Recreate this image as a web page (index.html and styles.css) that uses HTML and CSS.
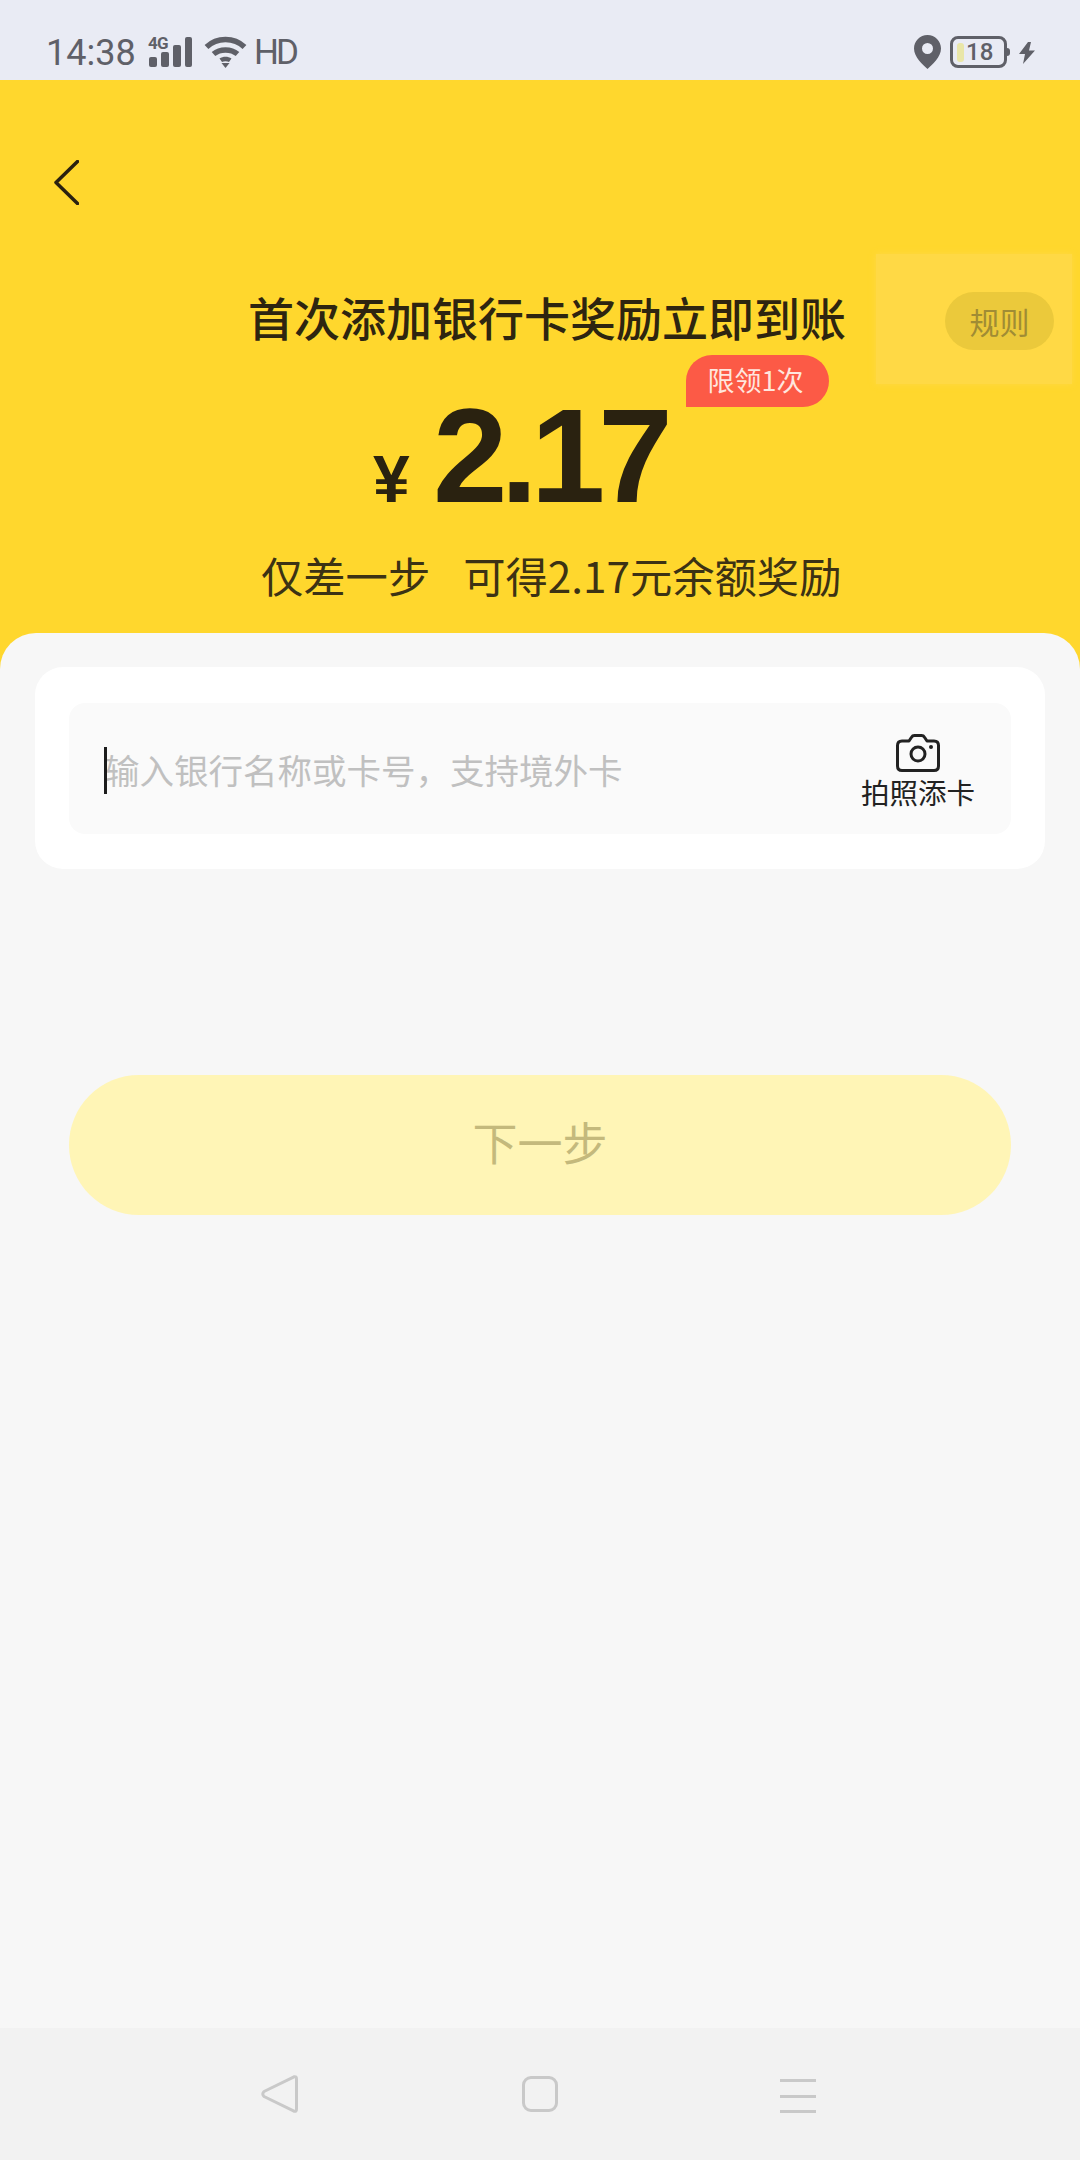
FILE: index.html
```html
<!DOCTYPE html>
<html lang="zh-CN">
<head>
<meta charset="utf-8">
<title>添加银行卡</title>
<link rel="stylesheet" href="styles.css">
</head>
<body>
<div class="page">
  <header class="status">
    <div class="status-left">
      <span class="time">14:38</span>
      <span class="signal">
        <span class="net">4G</span>
        <svg class="signal-bars" viewBox="0 0 43 30" width="43" height="30"><rect x="0" y="20" width="8" height="10" rx="2"/><rect x="12" y="15" width="8" height="15" rx="2"/><rect x="24" y="8" width="8" height="22" rx="2"/><rect x="36" y="0" width="7" height="30" rx="2"/></svg>
      </span>
      <svg class="wifi" viewBox="0 0 43 32" width="43" height="32"><g fill="none" stroke="#5f6068" stroke-width="5.500"><path d="M2.500 11C13 1 30 1 40.500 11"/><path d="M9.500 18C16 12.500 27 12.500 33.500 18"/></g><path d="M15.500 22.500C19 20 24 20 27.500 22.500L25 26C23 25 20 25 18 26Z"/><path d="M17.500 27H25.500L21.500 32Z"/></svg>
      <span class="hd">HD</span>
    </div>
    <div class="status-right">
      <svg class="pin" viewBox="0 0 27 34" width="27" height="34"><path fill-rule="evenodd" d="M13.500 0C6 0 0 6 0 13.500C0 22 9 30 13.500 34C18 30 27 22 27 13.500C27 6 21 0 13.500 0ZM13.500 8A5.500 5.500 0 1 1 13.500 19A5.500 5.500 0 1 1 13.500 8Z"/></svg>
      <span class="battery"><span class="battery-fill"></span><span class="battery-num">18</span></span>
      <span class="battery-nub"></span>
      <svg class="bolt" viewBox="0 0 16 22" width="16" height="22"><path d="M9 0L0 12H6L4 22L16 8.500H10L12 0Z"/></svg>
    </div>
  </header>

  <section class="hero">
    <svg class="back" viewBox="0 0 25 45" width="25" height="45"><path d="M23.500 1.500L2 22.500L23.500 43.500" fill="none" stroke="#2a2110" stroke-width="3.500" stroke-linecap="round" stroke-linejoin="round"/></svg>
    <h1 class="title">首次添加银行卡奖励立即到账</h1>
    <div class="amount"><span class="yen">¥</span><span class="value">2.17</span></div>
    <p class="sub"><span>仅差一步</span><span>可得2.17元余额奖励</span></p>
    <div class="rule-glow"><span class="rule-pill">规则</span></div>
    <span class="badge">限领1次</span>
  </section>

  <main class="sheet">
    <div class="card">
      <div class="field">
        <span class="hint"><i class="caret"></i>输入银行名称或卡号，支持境外卡</span>
        <div class="scan">
          <svg class="camera" viewBox="0 0 44 38" width="44" height="38"><path d="M13 7L15.500 3.200Q16.500 1.500 18.500 1.500H25.500Q27.500 1.500 28.500 3.200L31 7H38Q42.500 7 42.500 11.500V32Q42.500 36.500 38 36.500H6Q1.500 36.500 1.500 32V11.500Q1.500 7 6 7Z" fill="none" stroke="#222" stroke-width="3" stroke-linejoin="round"/><circle cx="22" cy="20" r="7" fill="none" stroke="#222" stroke-width="3"/><circle cx="35" cy="13" r="2" fill="#222"/></svg>
          <span class="scan-label">拍照添卡</span>
        </div>
      </div>
    </div>
    <button class="next" type="button">下一步</button>
  </main>

  <nav class="navbar">
    <svg class="nav-back" viewBox="0 0 37 38" width="37" height="38"><path d="M33 1.800Q35.500 1 35.500 4V34Q35.500 37 33 36.200L3 21.500Q0.500 19 3 16.500Z" fill="none" stroke="#c9c9c9" stroke-width="3" stroke-linejoin="round"/></svg>
    <span class="nav-home"></span>
    <span class="nav-menu"><i></i><i></i><i></i></span>
  </nav>
</div>
</body>
</html>
```
FILE: styles.css
```css
* { box-sizing: border-box; }
html, body { margin: 0; padding: 0; }
body { font-family: "Noto Sans CJK SC", "Noto Sans", sans-serif; background: #f7f7f7; }
.page { width: 1080px; height: 2160px; display: flex; flex-direction: column; overflow: hidden; }

.status { height: 80px; flex: none; background: #e9ebf4; display: flex; justify-content: space-between; padding: 0 45px 0 46px; color: #5f6068; }
.status svg { fill: #5f6068; display: block; }
.status-left { display: flex; align-items: flex-start; }
.time { font: 400 36px/40px Roboto, sans-serif; margin-top: 33px; width: 103px; white-space: nowrap; }
.signal { position: relative; width: 43px; margin-top: 37px; height: 30px; }
.signal-bars { position: absolute; left: 0; top: 0; }
.net { position: absolute; left: -1px; top: -2px; z-index: 1; font: 700 17px/16px Roboto, sans-serif; letter-spacing: -0.800px; background: #e9ebf4; width: 22px; height: 16px; text-align: left; }
.wifi { margin: 36px 0 0 12px; }
.hd { font: 400 35px/40px Roboto, sans-serif; letter-spacing: -3px; margin: 33px 0 0 7px; }
.status-right { display: flex; align-items: flex-start; }
.pin { margin-top: 35px; }
.battery { width: 57px; height: 32px; margin: 36px 0 0 9px; border: 3px solid #5f6068; border-radius: 8px; display: flex; align-items: center; padding-left: 4px; }
.battery-fill { width: 7px; height: 19px; background: #e9e6a8; border-radius: 3px; flex: none; }
.battery-num { font: 500 24px/26px Roboto, sans-serif; margin-left: 2px; }
.battery-nub { width: 3px; height: 8px; margin-top: 48px; background: #5f6068; border-radius: 0 3px 3px 0; }
.bolt { margin: 42px 0 0 9px; }

.hero { position: relative; flex: none; height: 593px; background: #ffd72d; padding-top: 80px; color: #2e2510; }
.back { display: block; margin-left: 54px; }
.title { margin: 81px 0 0 248px; font-size: 46px; line-height: 60px; font-weight: 500; white-space: nowrap; }
.amount { display: flex; align-items: baseline; margin-left: 373px; height: 199px; line-height: 219px; font-family: "Liberation Sans", Arial, sans-serif; font-weight: 700; color: #2a2210; }
.yen { font-size: 66px; width: 60px; }
.value { font-size: 134px; letter-spacing: -7px; }
.sub { margin: 0 0 0 261px; display: flex; gap: 33px; font-size: 42.300px; line-height: 60px; color: #3c3214; white-space: nowrap; }
.rule-glow { position: absolute; left: 876px; top: 174px; width: 196px; height: 130px; background: #ffd945; box-shadow: 0 0 6px #ffd945; padding: 4px 0 0 69px; display: flex; align-items: center; }
.rule-pill { width: 109px; height: 58px; border-radius: 29px; background: #ebc93b; color: #a08c34; font-size: 30px; line-height: 58px; text-align: center; }
.badge { position: absolute; left: 686px; top: 275px; width: 143px; height: 52px; background: #fc5a46; color: #ffe6de; border-radius: 26px 26px 26px 0; font-size: 27px; line-height: 50px; text-align: center; padding-right: 4px; white-space: nowrap; }

.sheet { flex: 1; margin-top: -40px; position: relative; background: #f7f7f7; border-radius: 36px 36px 0 0; padding: 34px 35px 0; }
.card { background: #fff; border-radius: 28px; padding: 36px 34px 35px; }
.field { height: 131px; background: #fafafa; border-radius: 16px; display: flex; align-items: center; justify-content: space-between; padding: 0 36px 0 36px; }
.hint { position: relative; font-size: 34.500px; line-height: 48px; color: #c0c0c0; white-space: nowrap; }
.caret { position: absolute; left: -1px; top: 2px; width: 3px; height: 47px; background: #1c1c1c; }
.scan { display: flex; flex-direction: column; align-items: center; margin-top: 3px; gap: 5px; }
.camera { display: block; }
.scan-label { font-size: 28.500px; line-height: 30px; color: #222; white-space: nowrap; }
.next { display: block; width: 942px; height: 140px; margin: 206px 0 0 34px; border: 0; border-radius: 70px; background: #fff5b6; color: #c4b97c; font-family: inherit; font-size: 45px; padding: 0 0 8px; }

.navbar { flex: none; height: 132px; background: #f2f2f2; position: relative; display: flex; align-items: flex-start; padding: 47px 0 0 261px; }
.nav-back { display: block; }
.nav-home { width: 36px; height: 36px; margin: 1px 0 0 224px; border: 3px solid #c9c9c9; border-radius: 9px; }
.nav-menu { width: 36px; margin: 4px 0 0 222px; display: flex; flex-direction: column; gap: 12.500px; }
.nav-menu i { display: block; height: 3px; background: #c9c9c9; }
```
